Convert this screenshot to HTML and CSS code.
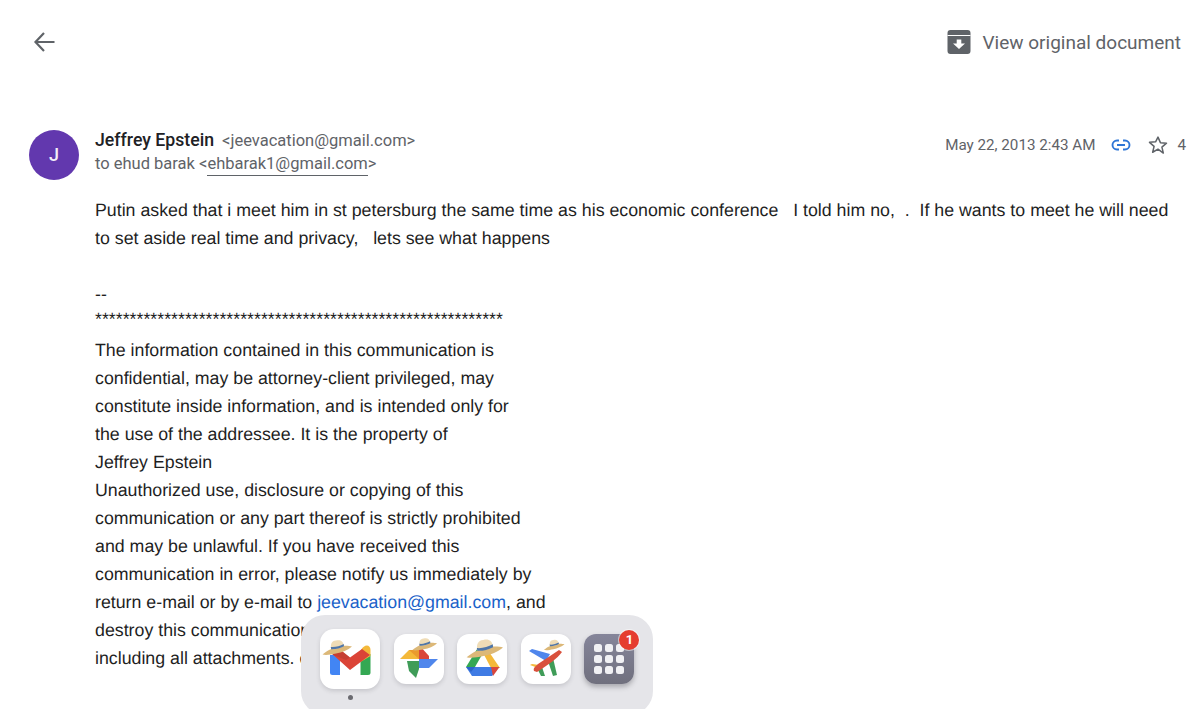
FILE: index.html
```html
<!DOCTYPE html>
<html lang="en">
<head>
<meta charset="utf-8">
<title>Email</title>
<link rel="stylesheet" href="styles.css">
</head>
<body>
<svg class="defs" width="0" height="0" aria-hidden="true">
  <symbol id="hat" viewBox="0 0 30 20">
    <path d="M0.5 15.500 C6 11 9 10 11 9.500 L20 7 C24 6.500 28 7 30 7.500 C26 11 20 13.500 14 14.500 C9 15.500 4 16.500 0.500 15.500Z" fill="#dcb878"/>
    <path d="M9 10 C8.500 5 9.500 2 14 1.500 C18 0.500 21 1.500 22 7 C18 9.500 13 10.500 9 10Z" fill="#efdcb6"/>
    <path d="M8.800 8 C13 8.500 18 7 21.700 5 L22 7.300 C18 9.500 13 10.500 9.200 10.200Z" fill="#4f76a8"/>
  </symbol>
</svg>
<main class="page">
  <header class="topbar">
    <svg class="back" viewBox="0 0 24 24"><path d="M22.500 12H4M12 3 3.500 12l8.500 9" fill="none" stroke="#5f6368" stroke-width="2.200"/></svg>
    <a class="original">
      <svg class="archive" viewBox="0 0 24 24"><path d="M3.500 0h17A3 3 0 0 1 23.500 3v18a3 3 0 0 1-3 3h-17a3 3 0 0 1-3-3V3a3 3 0 0 1 3-3Z" fill="#5f6368"/><path d="M.5 5.500h23" stroke="#fff" stroke-width="1"/><path d="M9.700 9.500h4.600v4H18l-6 5.500-6-5.500h3.700Z" fill="#fff"/></svg>
      <span>View original document</span>
    </a>
  </header>
  <article class="message">
    <div class="avatar">J</div>
    <div class="content">
      <div class="meta">
        <div class="people">
          <div class="from"><strong>Jeffrey Epstein</strong><span>&lt;jeevacation@gmail.com&gt;</span></div>
          <div class="to">to ehud barak &lt;<span class="addr">ehbarak1@gmail.com</span>&gt;</div>
        </div>
        <div class="stamp">
          <span class="date">May 22, 2013 2:43 AM</span>
          <svg class="link" viewBox="0 0 20 12"><path d="M8 1.500H6a4.500 4.500 0 0 0 0 9h2M12 1.500h2a4.500 4.500 0 0 1 0 9h-2M6 6h8" fill="none" stroke="#2f76d6" stroke-width="1.900"/></svg>
          <svg class="star" viewBox="0 0 24 24"><path d="M12 2.500l2.900 6.700 7.300.6-5.500 4.800 1.700 7.100L12 17l-6.400 3.700 1.700-7.100-5.500-4.800 7.300-.6Z" fill="none" stroke="#5f6368" stroke-width="1.800" stroke-linejoin="round"/></svg>
          <span class="count">4</span>
        </div>
      </div>
      <div class="body">
        <p>Putin asked that i meet him in st petersburg the same time as his economic conference &nbsp; I told him no, &nbsp;. &nbsp;If he wants to meet he will need to set aside real time and privacy, &nbsp; lets see what happens</p>
        <div class="signature">
          <div>--</div>
          <div class="stars">***********************************************************</div>
          The information contained in this communication is<br>
          confidential, may be attorney-client privileged, may<br>
          constitute inside information, and is intended only for<br>
          the use of the addressee. It is the property of<br>
          Jeffrey Epstein<br>
          Unauthorized use, disclosure or copying of this<br>
          communication or any part thereof is strictly prohibited<br>
          and may be unlawful. If you have received this<br>
          communication in error, please notify us immediately by<br>
          return e-mail or by e-mail to <a class="mail">jeevacation@gmail.com</a>, and<br>
          destroy this communication and all copies thereof,<br>
          including all attachments. copyright -all rights reserved
        </div>
      </div>
    </div>
  </article>
</main>
<nav class="dock">
  <div class="app-wrap">
    <div class="tile tile-large">
      <svg viewBox="0 0 60 60">
        <path d="M10 26h10v20h-7.500a2.500 2.500 0 0 1-2.500-2.500Z" fill="#4285f4"/>
        <path d="M40.500 25h10v18.500a2.500 2.500 0 0 1-2.500 2.500h-7.500Z" fill="#34a853"/>
        <path d="M41 21 C44 15 50.500 15 50.500 21 V27 L40.500 33Z" fill="#f4b93a"/>
        <path d="M10 23 L18 19 L30 28.500 L42 20 L50 26 L30 41Z" fill="#db4437"/>
        <path d="M10 22 L18 19 L30 28.500 L26 31 L13 26Z" fill="#b23a30" opacity=".55"/>
        <use href="#hat" x="2" y="10" width="30" height="20"/>
      </svg>
    </div>
    <i class="running"></i>
  </div>
  <div class="tile">
    <svg viewBox="0 0 50 50">
      <path d="M6 25 L15 16 H25 V25Z" fill="#f4b93a"/>
      <path d="M15 16 H25 V25Z" fill="#ea9a2e"/>
      <path d="M25 11 L35 22 V27 H25Z" fill="#d9473c"/>
      <path d="M25 25 H44 L35 34 H25Z" fill="#4f86ec"/>
      <path d="M13 27 H25 V35 L22 44 L15 37Z" fill="#3f9c58"/>
      <use href="#hat" x="18" y="3" width="25" height="17"/>
    </svg>
  </div>
  <div class="tile">
    <svg viewBox="0 0 50 50">
      <path d="M22 12 H30 L18 33 H9Z" fill="#34a853"/>
      <path d="M24 15 H30 L43 34 H34Z" fill="#f4b93a"/>
      <path d="M17.500 33 H33 L42 33 L35 42 H15 L9 33Z" fill="#3f7be4"/>
      <path d="M34 33 H42.500 L36 42Z" fill="#d9473c"/>
      <path d="M9 33 H18 L14 38Z" fill="#2c65c9"/>
      <use href="#hat" x="9" y="4" width="37" height="25"/>
    </svg>
  </div>
  <div class="tile">
    <svg viewBox="0 0 50 50">
      <path d="M8 17 L11 15 L29 20 L25 27Z" fill="#4f86ec"/>
      <path d="M27 27 L32 24 L36 41 L32 42Z" fill="#3f9c58"/>
      <path d="M17 36 L21 33 L24 42 L20 42Z" fill="#3f9c58"/>
      <path d="M9 31 L11 30 L18 31 L17 34Z" fill="#f4b93a"/>
      <path d="M13 37 C12 34 14 33 17 30 L38 16 L41 18 C36 25 28 30 16 38Z" fill="#d9503c"/>
      <use href="#hat" x="21" y="5" width="24" height="14"/>
    </svg>
  </div>
  <div class="tile launcher">
    <div class="grid"><i></i><i></i><i></i><i></i><i></i><i></i><i></i><i></i><i></i></div>
    <span class="badge">1</span>
  </div>
</nav>
</body>
</html>
```
FILE: styles.css
```css
html, body {
  margin: 0;
  height: 100%;
  overflow: hidden;
  background: #fff;
}

.defs {
  display: block;
  height: 0;
}

.page {
  display: flex;
  flex-direction: column;
}

.topbar {
  display: flex;
  align-items: center;
  justify-content: space-between;
  height: 84px;
  padding: 0 19px 0 32px;
}

.back {
  width: 24px;
  height: 24px;
}

.original {
  display: flex;
  align-items: center;
  gap: 11px;
  font: 19px/25px Roboto, sans-serif;
  color: #5f6368;
}

.archive {
  width: 24px;
  height: 24px;
}

.message {
  display: flex;
  gap: 16px;
  padding: 46px 0 0 29px;
}

.avatar {
  flex: none;
  width: 50px;
  height: 50px;
  border-radius: 50%;
  background: #6238ae;
  color: #f4eef8;
  font: 500 18px/50px Roboto, sans-serif;
  text-align: center;
}

.content {
  flex: 1;
  min-width: 0;
}

.meta {
  display: flex;
  justify-content: space-between;
  padding-right: 14px;
  font-family: Roboto, sans-serif;
}

.from {
  display: flex;
  align-items: baseline;
  gap: 8px;
  font-size: 16.500px;
  line-height: 20px;
  color: #5f6368;
}

.from strong {
  font-weight: 500;
  font-size: 17.700px;
  color: #202124;
}

.to {
  margin-top: 1px;
  font-size: 16.500px;
  line-height: 24px;
  color: #5f6368;
}

.addr {
  display: inline-block;
  line-height: 22px;
  border-bottom: 1px solid #5f6368;
}

.stamp {
  display: flex;
  align-items: center;
  height: 30px;
  font-size: 15.200px;
  color: #5f6368;
}

.date {
  margin-right: 16px;
}

.link {
  width: 20px;
  height: 12px;
  margin-right: 17px;
}

.star {
  width: 20px;
  height: 20px;
  margin-right: 9px;
}

.body {
  padding: 20px 16px 0 0;
  font: 17.770px/28px "Liberation Sans", Arial, sans-serif;
  color: #1f1f1f;
  text-rendering: geometricPrecision;
}

.body p {
  margin: 0;
}

.signature {
  margin-top: 28px;
}

.stars {
  line-height: 22px;
  padding-bottom: 6px;
}

.mail {
  color: #1a62c9;
}

.dock {
  position: absolute;
  left: 301px;
  top: 615px;
  width: 352px;
  height: 100px;
  box-sizing: border-box;
  padding: 14px 18px 0 19px;
  display: flex;
  align-items: flex-start;
  gap: 13.600px;
  border-radius: 24px;
  background: #e5e5e9;
}

.app-wrap {
  display: flex;
  flex-direction: column;
  align-items: center;
  gap: 6px;
}

.tile {
  position: relative;
  flex: none;
  width: 50px;
  height: 50px;
  margin-top: 5px;
  border-radius: 12px;
  background: #fff;
  box-shadow: 0 2px 4px rgba(60, 60, 70, .18);
}

.tile-large {
  width: 60px;
  height: 60px;
  margin-top: 0;
  border-radius: 14px;
}

.tile svg {
  display: block;
  width: 100%;
  height: 100%;
}

.running {
  width: 5px;
  height: 5px;
  border-radius: 50%;
  background: #6a6a70;
}

.launcher {
  background: linear-gradient(#85859a, #70707e);
  box-shadow: 0 3px 5px rgba(60, 60, 70, .35);
  display: flex;
  align-items: center;
  justify-content: center;
}

.grid {
  display: grid;
  grid-template-columns: repeat(3, 8px);
  gap: 3px;
}

.grid i {
  height: 8px;
  border-radius: 2.500px;
  background: #f1f1f4;
}

.badge {
  position: absolute;
  right: -5px;
  top: -4px;
  width: 20px;
  height: 20px;
  border-radius: 50%;
  background: #e53d30;
  box-shadow: 0 0 0 1px rgba(255, 255, 255, .5);
  color: #fff;
  font: 700 13px/20px Roboto, sans-serif;
  text-align: center;
}
```
